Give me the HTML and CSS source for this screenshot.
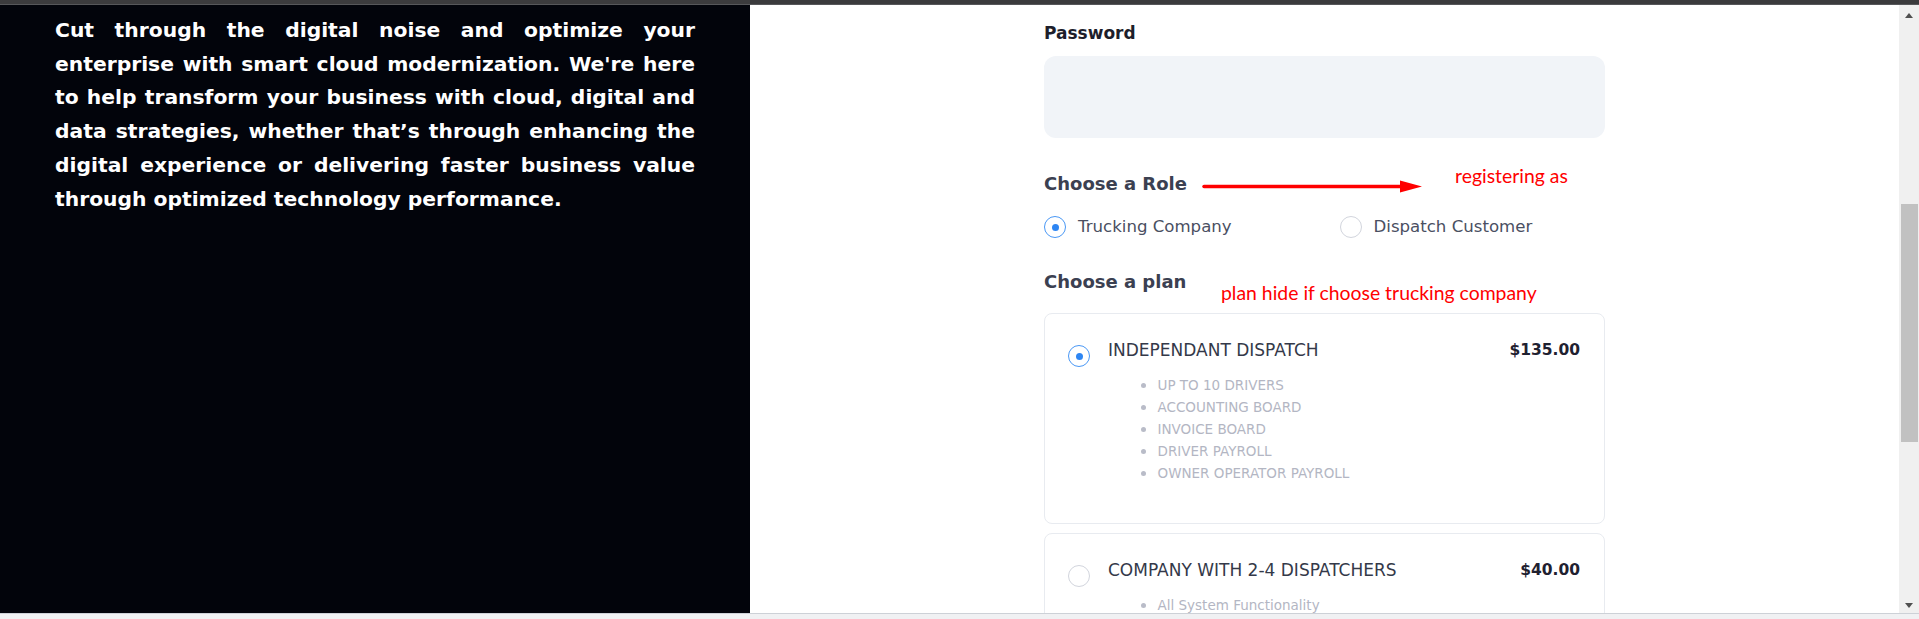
FILE: index.html
```html
<!DOCTYPE html>
<html lang="en">
<head>
<meta charset="utf-8">
<title>Register</title>
<link rel="stylesheet" href="styles.css">
</head>
<body>
<div class="window">
  <div class="topbar"></div>
  <div class="main">
    <aside class="hero">
      <p class="hero-text">
        <span class="line">Cut through the digital noise and optimize your</span>
        <span class="line">enterprise with smart cloud modernization. We're here</span>
        <span class="line">to help transform your business with cloud, digital and</span>
        <span class="line">data strategies, whether that’s through enhancing the</span>
        <span class="line">digital experience or delivering faster business value</span>
        <span class="line last">through optimized technology performance.</span>
      </p>
    </aside>
    <section class="content">
      <form class="form">
        <label class="label" for="pw">Password</label>
        <input class="input" id="pw" type="password">

        <h3 class="heading">Choose a Role</h3>
        <div class="roles">
          <label class="option"><span class="radio checked"></span><span>Trucking Company</span></label>
          <label class="option"><span class="radio"></span><span>Dispatch Customer</span></label>
        </div>

        <h3 class="heading plan-heading">Choose a plan</h3>
        <div class="plans">
          <div class="plan">
            <div class="plan-head">
              <span class="radio checked"></span>
              <span class="plan-name">INDEPENDANT DISPATCH</span>
              <span class="plan-price">$135.00</span>
            </div>
            <ul class="features">
              <li>UP TO 10 DRIVERS</li>
              <li>ACCOUNTING BOARD</li>
              <li>INVOICE BOARD</li>
              <li>DRIVER PAYROLL</li>
              <li>OWNER OPERATOR PAYROLL</li>
            </ul>
          </div>
          <div class="plan">
            <div class="plan-head">
              <span class="radio"></span>
              <span class="plan-name">COMPANY WITH 2-4 DISPATCHERS</span>
              <span class="plan-price">$40.00</span>
            </div>
            <ul class="features">
              <li>All System Functionality</li>
            </ul>
          </div>
        </div>

        <svg class="note-arrow" width="222" height="14" viewBox="0 0 222 14">
          <line x1="2" y1="6.5" x2="200" y2="6.5" stroke="#f00" stroke-width="3.5" stroke-linecap="round"/>
          <polygon points="198,0.5 220,6.5 198,12.5" fill="#f00"/>
        </svg>
        <span class="note note-role">registering as</span>
        <span class="note note-plan">plan hide if choose trucking company</span>
      </form>
    </section>
    <div class="scrollbar">
      <span class="sb-up"></span>
      <span class="sb-thumb"></span>
      <span class="sb-down"></span>
    </div>
  </div>
  <div class="bottombar"></div>
</div>
</body>
</html>
```

FILE: styles.css
```css
* { box-sizing: border-box; }

html, body {
  margin: 0;
  padding: 0;
  height: 100%;
  overflow: hidden;
  background: #ffffff;
}

.window {
  display: flex;
  flex-direction: column;
  width: 1919px;
  height: 619px;
}

.topbar {
  height: 5px;
  flex: none;
  background: #3b3b3d;
  border-bottom: 1px solid #56575a;
}

.main {
  flex: 1;
  display: flex;
  min-height: 0;
  overflow: hidden;
}

.bottombar {
  height: 6px;
  flex: none;
  background: #f0f1f3;
  border-top: 1px solid #cdd1d7;
}

/* left hero */
.hero {
  width: 750px;
  flex: none;
  background: #02040b;
  padding: 9px 55px 0 55px;
}

.hero-text {
  margin: 0;
  color: #ffffff;
  font-family: "DejaVu Sans", "Liberation Sans", sans-serif;
  font-weight: 700;
  font-size: 20.3px;
  line-height: 33.7px;
}

.line {
  display: block;
  white-space: nowrap;
  text-align: justify;
  text-align-last: justify;
}

.line.last {
  text-align-last: left;
}

/* right content */
.content {
  flex: 1;
  min-width: 0;
  background: #ffffff;
  overflow: hidden;
}

.form {
  position: relative;
  width: 561px;
  margin: 0 auto;
  padding-top: 16px;
  font-family: "DejaVu Sans", "Liberation Sans", sans-serif;
}

.label {
  display: block;
  font-weight: 700;
  font-size: 17px;
  line-height: 24px;
  color: #1d1e2b;
}

.input {
  display: block;
  width: 100%;
  height: 82px;
  margin-top: 11px;
  border: 0;
  border-radius: 12px;
  background: #f1f4f8;
  outline: none;
}

.heading {
  margin: 32px 0 0;
  font-weight: 700;
  font-size: 18px;
  line-height: 27px;
  color: #3b4051;
}

.plan-heading {
  margin-top: 29px;
}

.roles {
  margin-top: 18px;
  display: grid;
  grid-template-columns: 1fr 1fr;
  column-gap: 30px;
}

.option {
  display: flex;
  align-items: center;
  gap: 12px;
  font-size: 16.6px;
  line-height: 24px;
  color: #4a4f62;
}

.radio {
  width: 22px;
  height: 22px;
  flex: none;
  border-radius: 50%;
  border: 1px solid #d2d5dd;
  background: #fff;
  display: inline-grid;
  place-items: center;
}

.radio.checked {
  border: 1.5px solid #4a98f5;
}

.radio.checked::after {
  content: "";
  width: 7px;
  height: 7px;
  border-radius: 50%;
  background: #2e86f3;
}

.plans {
  margin-top: 18px;
}

.plan {
  border: 1px solid #e8ebf0;
  border-radius: 8px;
  padding: 24px 24px 24px 23px;
  background: #fff;
}

.plan + .plan {
  margin-top: 9px;
}

.plan-head {
  display: flex;
  align-items: flex-start;
  height: 24px;
  line-height: 24px;
}

.plan-head .radio {
  margin-top: 7px;
}

.plan-name {
  flex: 1;
  margin-left: 18px;
  font-size: 17px;
  color: #343949;
}

.plan-price {
  font-weight: 700;
  font-size: 15.5px;
  color: #1f2130;
}

.features {
  list-style: none;
  margin: 12px 0 15px 73px;
  padding: 0;
}

.features li {
  display: flex;
  align-items: center;
  font-size: 13.5px;
  line-height: 22px;
  color: #b3b6c3;
}

.features li::before {
  content: "";
  width: 5px;
  height: 5px;
  flex: none;
  border-radius: 50%;
  background: #b9bcc8;
  margin-right: 11.5px;
}

/* annotation overlays */
.note-arrow {
  position: absolute;
  left: 158px;
  top: 175px;
}

.note {
  position: absolute;
  font-family: Lato, "Open Sans", sans-serif;
  font-size: 19.4px;
  line-height: 24px;
  color: #ff0000;
  white-space: nowrap;
}

.note-role {
  left: 411px;
  top: 158.5px;
}

.note-plan {
  left: 177px;
  top: 275.5px;
}

/* scrollbar */
.scrollbar {
  width: 20px;
  flex: none;
  background: #f0f0f0;
  display: flex;
  flex-direction: column;
  align-items: center;
}

.sb-up {
  margin-top: 8px;
  width: 0;
  height: 0;
  border-left: 4.5px solid transparent;
  border-right: 4.5px solid transparent;
  border-bottom: 5px solid #505050;
}

.sb-thumb {
  margin-top: 186px;
  align-self: stretch;
  margin-left: 2px;
  margin-right: 1px;
  height: 238px;
  background: #c1c1c1;
}

.sb-down {
  margin-top: auto;
  margin-bottom: 5px;
  width: 0;
  height: 0;
  border-left: 4.5px solid transparent;
  border-right: 4.5px solid transparent;
  border-top: 5px solid #505050;
}
```
